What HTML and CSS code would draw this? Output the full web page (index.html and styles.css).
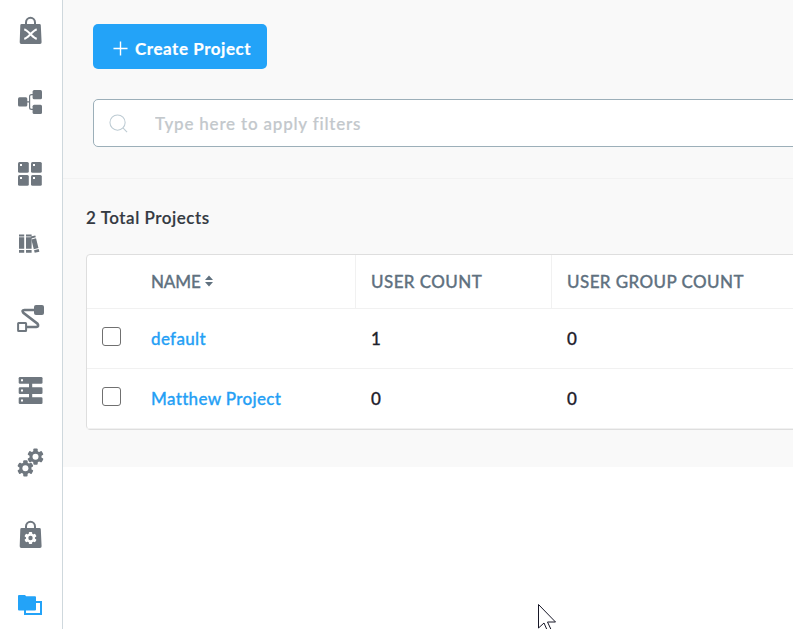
FILE: index.html
```html
<!DOCTYPE html>
<html lang="en">
<head>
<meta charset="utf-8">
<title>Projects</title>
<link rel="stylesheet" href="styles.css">
</head>
<body>
<svg class="defs" aria-hidden="true">
  <symbol id="gear" viewBox="-9 -9 18 18">
    <circle r="6"/>
    <rect x="-2.2" y="-8.1" width="4.4" height="16.2" rx="1"/>
    <rect x="-2.2" y="-8.1" width="4.4" height="16.2" rx="1" transform="rotate(60)"/>
    <rect x="-2.2" y="-8.1" width="4.4" height="16.2" rx="1" transform="rotate(120)"/>
  </symbol>
  <symbol id="bag" viewBox="0 0 36 36">
    <path d="M9.5 11h18q1.2 0 1.3 1.2l.8 17q.1 1.800-1.600 1.800H9.300q-1.700 0-1.600-1.800l.6-17Q8.400 11 9.500 11z"/>
    <path d="M14 12V9.500a4.500 4.800 0 0 1 9 0V12" fill="none" stroke="currentColor" stroke-width="2"/>
  </symbol>
</svg>
<div class="app">
  <nav class="sidebar">
    <svg class="icon" viewBox="0 0 36 36"><use href="#bag"/><path class="cut-line" d="M12.200 16.500C14.500 16.800 16 18.600 18.500 21.100S22.500 25.400 24.800 25.700M24.800 16.500C22.500 16.800 21 18.600 18.500 21.100S14.500 25.400 12.200 25.700"/></svg>
    <svg class="icon" viewBox="0 0 36 36"><rect x="6" y="12.200" width="9.300" height="9.300" rx="1.500"/><rect x="20.600" y="5" width="9.400" height="9.200" rx="1.500"/><rect x="20.600" y="19.800" width="9.400" height="9.200" rx="1.500"/><path class="line thin" d="M15 16.900h2.600M21 9.700h-1.500q-1.900 0-1.900 1.900v10.800q0 1.900 1.900 1.900H21"/></svg>
    <svg class="icon" viewBox="0 0 36 36"><rect x="6" y="5" width="10.800" height="10.800" rx="1.500"/><rect x="19" y="5" width="10.800" height="10.800" rx="1.500"/><rect x="6" y="18" width="10.800" height="10.800" rx="1.500"/><rect x="19" y="18" width="10.800" height="10.800" rx="1.500"/><path class="cut" d="M8 7h2v2H8zM21 7h2v2h-2zM8 20h2v2H8zM21 20h2v2h-2z"/></svg>
    <svg class="icon" viewBox="0 0 36 36"><path d="M7 5.500h5.200v2H7zM7 8.300h5.200v11.500H7zM7 21h5.200v2.800H7zM14 5.500h5.600v2H14zM14 8.300h5.600v11.500H14zM14 21h5.600v2.800H14z"/><g transform="rotate(-14 22 16)"><path d="M20.800 7h4.800v2h-4.800zM20.800 10h4.800v10h-4.800zM20.800 21h4.800v2.800h-4.800z"/></g></svg>
    <svg class="icon" viewBox="0 0 36 36"><rect x="22" y="4" width="10" height="10" rx="2"/><rect class="line" x="6.100" y="22" width="8" height="8" rx=".5"/><path class="line wide" d="M22.500 9H12.500q-3.200.3-1.200 2.800L25.500 22.700q1.800 2.900-1.300 3.300H15"/></svg>
    <svg class="icon" viewBox="0 0 36 36"><rect x="6.700" y="4" width="23.800" height="6.700" rx="1.300"/><rect x="6.700" y="14.300" width="23.800" height="6.700" rx="1.300"/><rect x="6.700" y="24.300" width="23.800" height="6.700" rx="1.300"/><path d="M17 9h3.200v18H17z"/><path class="cut" d="M9 6.300h2v2H9zM9 16.600h2v2H9zM9 26.600h2v2H9z"/></svg>
    <svg class="icon" viewBox="0 0 36 36"><use href="#gear" x="14.500" y="2.700" width="18" height="18"/><use href="#gear" x="4.400" y="14.300" width="18" height="18"/><circle class="cut" cx="23.500" cy="11.700" r="3"/><circle class="cut" cx="13.400" cy="23.300" r="3"/></svg>
    <svg class="icon" viewBox="0 0 36 36"><use href="#bag"/><use class="cut" href="#gear" x="11.700" y="14.200" width="13.600" height="13.600"/><circle cx="18.500" cy="21" r="2.200"/></svg>
    <svg class="icon active" viewBox="0 0 36 36"><path d="M7 6h6l1.200 1.200H23q1 0 1 1v12.300q0 1-1 1H7q-1 0-1-1V7q0-1 1-1z"/><path class="line" d="M24 13h5v12H13v-4"/></svg>
  </nav>
  <main class="content">
    <section class="panel">
      <div class="toolbar">
        <button class="create" type="button">
          <svg class="plus" viewBox="0 0 16 16"><path d="M8 .5v15M.5 8h15"/></svg>
          <span>Create Project</span>
        </button>
        <label class="search">
          <svg class="glass" viewBox="0 0 20 20"><circle cx="9" cy="9" r="8"/><path d="M14.700 14.700L19 19"/></svg>
          <input type="text" placeholder="Type here to apply filters">
        </label>
      </div>
      <div class="results">
        <h1 class="total">2 Total Projects</h1>
        <div class="table">
          <div class="row head">
            <div></div>
            <div class="name"><span class="t-name">NAME</span><svg class="sort" viewBox="0 0 8 12"><path d="M0 5L4 .5 8 5zM0 7h8L4 11.500z"/></svg></div>
            <div class="cell">USER COUNT</div>
            <div class="cell">USER GROUP COUNT</div>
          </div>
          <div class="row">
            <div class="check"><input type="checkbox" aria-label="default"></div>
            <div class="name"><a>default</a></div>
            <div class="cell">1</div>
            <div class="cell">0</div>
          </div>
          <div class="row">
            <div class="check"><input type="checkbox" aria-label="Matthew Project"></div>
            <div class="name"><a>Matthew Project</a></div>
            <div class="cell">0</div>
            <div class="cell">0</div>
          </div>
        </div>
      </div>
    </section>
  </main>
</div>
<svg class="cursor" viewBox="0 0 20 28"><path d="M.5.5v23.500l5.500-5 3.500 8 3.500-1.500-3.500-7.500H17.500z"/></svg>
</body>
</html>
```
FILE: styles.css
```css
* { box-sizing: border-box; }
body {
  margin: 0;
  height: 629px;
  overflow: hidden;
  position: relative;
  background: #fff;
  font-family: Lato, "Open Sans", sans-serif;
  font-size: 17px;
  font-weight: 500;
}
.defs { display: block; width: 0; height: 0; }
.app { display: flex; height: 629px; overflow: hidden; }

.sidebar {
  width: 63px;
  flex: none;
  display: flex;
  flex-direction: column;
  gap: 36px;
  padding: 13px 0 0 12px;
  border-right: 1px solid #cfd8dd;
  color: #6f777f;
}
.icon { width: 36px; height: 36px; flex: none; fill: currentColor; }
.active { color: #23a3f8; }
.cut { fill: #fff; color: #fff; }
.cut-line { fill: none; stroke: #fff; stroke-width: 2; }
.line { fill: none; stroke: currentColor; stroke-width: 2; }
.thin { stroke-width: 1.2; }
.wide { stroke-width: 2.6; }

.content { flex: 1; min-width: 0; overflow: hidden; }
.panel { width: 800px; height: 467px; background: #f9f9f9; }
.toolbar {
  height: 179px;
  padding: 24px 0 0 30px;
  border-bottom: 1px solid #f2f2f2;
}
.create {
  display: flex;
  align-items: center;
  width: 174px;
  height: 45px;
  padding: 4px 0 0 20px;
  gap: 7px;
  border: 0;
  border-radius: 5px;
  background: #23a3f8;
  color: #fff;
  font: 700 17px/22px Lato, sans-serif;
  letter-spacing: .55px;
  -webkit-text-stroke: .2px;
  white-space: nowrap;
}
.plus { width: 15px; height: 15px; flex: none; fill: none; stroke: #fff; stroke-width: 1.5; }
.search {
  display: flex;
  align-items: center;
  height: 48px;
  margin-top: 30px;
  padding-left: 15px;
  border: 1px solid #9cafb9;
  border-radius: 5px;
  background: #fff;
}
.glass { width: 19px; height: 19px; flex: none; fill: none; stroke: #bdcbd3; stroke-width: 1.1; }
.search input {
  flex: 1;
  margin-left: 27px;
  padding: 2px 0 0;
  border: 0;
  outline: 0;
  background: none;
  font: 500 17px/22px Lato, sans-serif;
  letter-spacing: .8px;
}
.search input::placeholder { color: #c3c8cc; opacity: 1; -webkit-text-stroke: .2px; }

.results { padding: 28px 0 0 23px; }
.total {
  margin: 0;
  font-size: 17px;
  line-height: 22px;
  font-weight: 600;
  letter-spacing: .53px;
  -webkit-text-stroke: .15px;
  color: #343a42;
}
.table {
  width: 760px;
  height: 176px;
  margin-top: 25px;
  border: 1px solid #dedede;
  border-radius: 4px;
  background: #fff;
}
.row {
  display: grid;
  grid-template-columns: 64px 204px 196px 1fr;
  height: 60px;
  border-bottom: 1px solid #f1f1f1;
  color: #1e222b;
  letter-spacing: .33px;
  -webkit-text-stroke: .3px;
}
.name, .cell { display: flex; align-items: center; white-space: nowrap; }
.cell { padding-left: 16px; }
.row.head { height: 54px; color: #60717f; letter-spacing: .42px; }
.t-name { letter-spacing: -.15px; }
.head .cell { border-left: 1px solid #f1f1f1; padding-left: 15px; }
.check { padding: 18px 0 0 15px; }
.check input {
  appearance: none;
  display: block;
  width: 19px;
  height: 19px;
  margin: 0;
  border: 1px solid #707070;
  border-radius: 3px;
  background: #fff;
}
.name a { color: #259ff5; }
.sort { width: 8px; height: 12px; margin: -1px 0 0 4px; fill: #60717f; }

.cursor {
  position: absolute;
  left: 538px;
  top: 604px;
  width: 20px;
  height: 28px;
  fill: #fff;
  stroke: #171727;
}
```
